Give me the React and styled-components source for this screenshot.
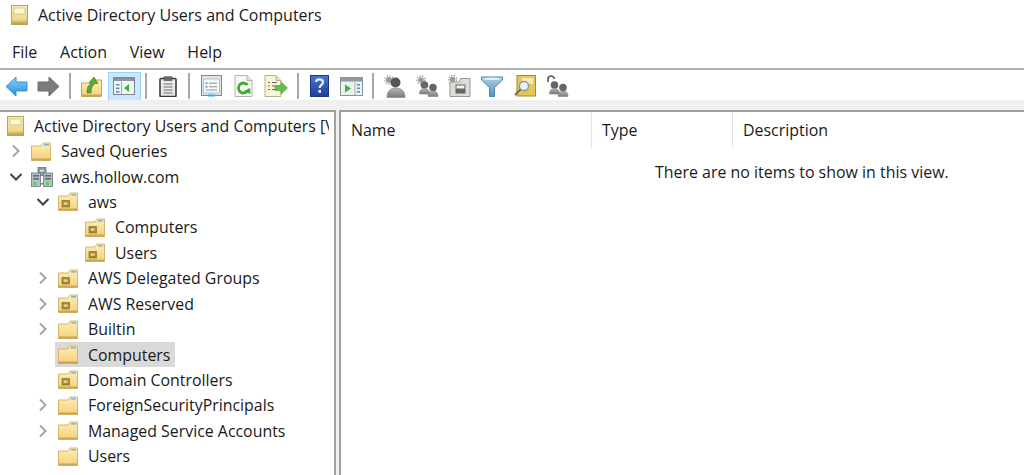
import React from 'react';
import styled, { createGlobalStyle } from 'styled-components';

const Global = createGlobalStyle`
  html, body { margin: 0; padding: 0; background: #fff; }
  body { font-family: "Open Sans", "Noto Sans", "Liberation Sans", sans-serif; color: #1a1a1a; overflow: hidden; }
`;

const Window = styled.div`
  width: 1024px;
  height: 475px;
  display: flex;
  flex-direction: column;
  overflow: hidden;
`;

const TitleBar = styled.div`
  height: 30px;
  display: flex;
  align-items: center;
  gap: 10px;
  padding-left: 11px;
  font-size: 16px;
`;

const MenuBar = styled.div`
  height: 40px;
  display: flex;
  align-items: center;
  gap: 22.7px;
  padding: 5px 0 0 12px;
  box-sizing: border-box;
  font-size: 16px;
  border-bottom: 2px solid #b0b0b0;
`;

const Toolbar = styled.div`
  height: 30px;
  display: flex;
  align-items: center;
  box-sizing: border-box;
  padding-top: 2px;
`;

const ToolButton = styled.div`
  width: 32.4px;
  height: 29px;
  display: flex;
  align-items: center;
  justify-content: center;
  box-sizing: border-box;
  background: ${p => (p.$active ? '#cce8ff' : 'transparent')};
  border: 1px solid ${p => (p.$active ? '#99d1ff' : 'transparent')};
`;

const ToolSep = styled.div`
  width: 11px;
  height: 26px;
  display: flex;
  justify-content: center;
  &::before { content: ''; width: 2px; background: #a8a8a8; }
`;

const Strip = styled.div`
  height: 10px;
  background: #f0f0f0;
`;

const Panes = styled.div`
  flex: 1;
  display: flex;
  background: #f0f0f0;
  min-height: 0;
`;

const LeftPane = styled.div`
  width: 336px;
  box-sizing: border-box;
  background: #fff;
  padding-top: 1px;
  border-top: 2px solid #a0a0a0;
  border-right: 2px solid #a0a0a0;
  overflow: hidden;
  font-size: 15.9px;
`;

const RightPane = styled.div`
  flex: 1;
  margin-left: 3px;
  background: #fff;
  border-top: 2px solid #a0a0a0;
  border-left: 2px solid #a0a0a0;
  font-size: 15.95px;
`;

const Row = styled.div`
  height: 25.43px;
  display: flex;
  align-items: center;
  white-space: nowrap;
  padding-left: ${p => 4 + Math.max(p.$level - 1, 0) * 27}px;
`;

const Chevron = styled.div`
  width: 24px;
  height: 100%;
  flex: none;
  display: flex;
  align-items: center;
  justify-content: center;
`;

const Item = styled.div`
  height: 25px;
  min-width: 0;
  display: flex;
  align-items: center;
  gap: ${p => p.$gap}px;
  padding: 0 5px 0 3px;
  background: ${p => (p.$selected ? '#d9d9d9' : 'transparent')};
`;

const Label = styled.span`
  min-width: 0;
  overflow: hidden;
`;

const HeaderRow = styled.div`
  height: 36px;
  display: flex;
`;

const HeaderCell = styled.div`
  width: ${p => p.$w}px;
  box-sizing: border-box;
  padding-left: 10px;
  display: flex;
  align-items: center;
  border-right: ${p => (p.$last ? 'none' : '1px solid #e5e5e5')};
`;

const Empty = styled.div`
  padding: 14px 0 0 314px;
  line-height: 20px;
`;

const Defs = styled.svg`
  display: block;
  width: 0;
  height: 0;
`;

const Glyph = styled.svg`
  display: block;
  flex: none;
  filter: blur(0.35px);
`;

const GradientDefs = () => (
  <Defs aria-hidden="true">
    <defs>
      <linearGradient id="folderFill" x1="0" y1="0" x2="0" y2="1">
        <stop offset="0" stopColor="#fdeeb8" />
        <stop offset="1" stopColor="#f5cf7a" />
      </linearGradient>
      <linearGradient id="bookFill" x1="0" y1="0" x2="0" y2="1">
        <stop offset="0" stopColor="#f8efb8" />
        <stop offset="0.75" stopColor="#ecd88a" />
        <stop offset="1" stopColor="#b8963c" />
      </linearGradient>
      <linearGradient id="blueArrow" x1="0" y1="0" x2="0" y2="1">
        <stop offset="0" stopColor="#8fd0f8" />
        <stop offset="1" stopColor="#1f8fe0" />
      </linearGradient>
      <linearGradient id="helpFill" x1="0" y1="0" x2="0" y2="1">
        <stop offset="0" stopColor="#4a78cc" />
        <stop offset="1" stopColor="#1c3f9a" />
      </linearGradient>
      <linearGradient id="funnelFill" x1="0" y1="0" x2="0" y2="1">
        <stop offset="0" stopColor="#a8d0e8" />
        <stop offset="1" stopColor="#5b93b8" />
      </linearGradient>
      <linearGradient id="personFill" x1="0" y1="0" x2="0" y2="1">
        <stop offset="0" stopColor="#b4b4b4" />
        <stop offset="1" stopColor="#7a7a7a" />
      </linearGradient>
    </defs>
  </Defs>
);

const ChevronRight = () => (
  <Glyph width="12" height="14" viewBox="0 0 12 14">
    <path d="M3 1.5 L8.5 7 L3 12.5" fill="none" stroke="#a6a6a6" strokeWidth="2" />
  </Glyph>
);

const ChevronDown = () => (
  <Glyph width="14" height="12" viewBox="0 0 14 12">
    <path d="M1.5 3 L7 8.5 L12.5 3" fill="none" stroke="#404040" strokeWidth="2" />
  </Glyph>
);

const Folder = ({ ou }) => (
  <Glyph width="20" height="19" viewBox="0 0 20 19">
    <path d="M0.5 4 H10 L12 1 H19.5 V18.5 H0.5 Z" fill="url(#folderFill)" stroke="#d9b667" />
    <rect x="13" y="2" width="5" height="1.6" fill="#7fb4e0" />
    <rect x="0.5" y="16.5" width="19" height="2" fill="#c9a653" />
    {ou && <rect x="4" y="8.5" width="7.5" height="6.5" fill="#a58a3a" stroke="#7c6a2a" strokeWidth="0.6" />}
    {ou && <rect x="5.6" y="10.4" width="4" height="2.4" fill="#e9d48a" />}
  </Glyph>
);

const BookIcon = () => (
  <Glyph width="17" height="20" viewBox="0 0 17 20">
    <rect x="0.5" y="0.5" width="16" height="19" fill="url(#bookFill)" stroke="#b9a25a" />
    <rect x="3" y="3" width="11" height="6" fill="#fbf7d8" stroke="#cdb96e" strokeWidth="0.7" />
  </Glyph>
);

const DomainIcon = () => (
  <Glyph width="22" height="20" viewBox="0 0 22 20">
    <rect x="7" y="0.5" width="8" height="8" fill="#8d9aa5" stroke="#5f6b75" strokeWidth="0.7" />
    <rect x="0.5" y="6" width="9" height="13.5" fill="#b6bfc7" stroke="#66737d" strokeWidth="0.8" />
    <rect x="12.5" y="6" width="9" height="13.5" fill="#b6bfc7" stroke="#66737d" strokeWidth="0.8" />
    <rect x="2" y="8" width="6" height="1.6" fill="#5e6a74" />
    <rect x="2" y="11" width="6" height="1.6" fill="#5e6a74" />
    <rect x="14" y="8" width="6" height="1.6" fill="#5e6a74" />
    <rect x="14" y="11" width="6" height="1.6" fill="#5e6a74" />
    <rect x="9" y="3" width="4" height="1.5" fill="#e6ebef" />
    <rect x="2.5" y="15" width="3" height="3" fill="#53d04a" />
    <rect x="15" y="15" width="3" height="3" fill="#53d04a" />
    <rect x="9.5" y="16" width="3" height="1.5" fill="#7b8791" />
  </Glyph>
);

const ArrowIcon = ({ dir, fill, stroke }) => (
  <Glyph width="23" height="21" viewBox="0 0 23 21">
    <path
      d={dir === 'left'
        ? 'M1 10.5 L11 1 V6 H22 V15 H11 V20 Z'
        : 'M22 10.5 L12 1 V6 H1 V15 H12 V20 Z'}
      fill={fill}
      stroke={stroke}
    />
  </Glyph>
);

const UpFolderIcon = () => (
  <Glyph width="21" height="21" viewBox="0 0 21 21">
    <path d="M0.5 7 H9 L11 4 H20.5 V20.5 H0.5 Z" fill="url(#folderFill)" stroke="#c9a653" />
    <rect x="0.5" y="18.5" width="20" height="2" fill="#c9a653" />
    <path d="M6 17 C6 12 7 9 10 8 L8 6.5 L13 1 L17 7.5 L14 7.5 C11.5 9 10 12 10 17 Z" fill="#58a92f" stroke="#3d7f1e" strokeWidth="0.6" />
  </Glyph>
);

const ConsoleTreeIcon = () => (
  <Glyph width="22" height="18" viewBox="0 0 22 18">
    <rect x="0.5" y="0.5" width="21" height="17" fill="#f2f5f7" stroke="#7a868e" />
    <rect x="1" y="1" width="20" height="3" fill="#8a96a0" />
    <path d="M8.5 4.5 V17" stroke="#9aa4ab" />
    <rect x="3" y="7" width="3.5" height="1.6" fill="#5a90c4" />
    <rect x="3" y="10.5" width="3.5" height="1.6" fill="#5a90c4" />
    <rect x="3" y="14" width="3.5" height="1.6" fill="#5a90c4" />
    <path d="M11 11 L16 7 V15 Z" fill="#3fb23a" />
  </Glyph>
);

const ClipboardIcon = () => (
  <Glyph width="18" height="21" viewBox="0 0 18 21">
    <rect x="1" y="2.5" width="16" height="18" rx="1" fill="#e9e9e9" stroke="#3c3c3c" strokeWidth="1.6" />
    <rect x="5" y="0.8" width="8" height="3.6" fill="#6b6b6b" stroke="#3c3c3c" strokeWidth="0.6" />
    <path d="M4.5 8 H13.5 M4.5 11 H13.5 M4.5 14 H13.5 M4.5 17 H13.5" stroke="#6f6f6f" strokeWidth="1.2" />
  </Glyph>
);

const PropertiesIcon = () => (
  <Glyph width="21" height="22" viewBox="0 0 21 22">
    <rect x="0.5" y="0.5" width="20" height="20" fill="#dfe5ea" stroke="#7d8890" />
    <rect x="2.5" y="4" width="16" height="14" fill="#f7f8f9" stroke="#a4adb4" strokeWidth="0.7" />
    <rect x="4.5" y="7.5" width="2" height="1.6" fill="#5a9ad8" />
    <rect x="4.5" y="11" width="2" height="1.6" fill="#5a9ad8" />
    <path d="M8 8.3 H16 M8 11.8 H16 M5 15 H16" stroke="#8b949b" strokeWidth="1.1" />
    <rect x="7" y="19.5" width="7" height="2" fill="#38a7e0" />
  </Glyph>
);

const RefreshIcon = () => (
  <Glyph width="19" height="22" viewBox="0 0 19 22">
    <path d="M1 0.5 H13 L18 5.5 V21.5 H1 Z" fill="#f6f6f2" stroke="#b5b5ad" />
    <path d="M13 0.5 V5.5 H18" fill="#e2e2dc" stroke="#b5b5ad" />
    <path d="M13.5 10 A5 5 0 1 0 13.5 16" fill="none" stroke="#3fa83a" strokeWidth="2.8" />
    <path d="M10 16 L16 13 L16.5 19 Z" fill="#3fa83a" />
  </Glyph>
);

const ExportIcon = () => (
  <Glyph width="24" height="22" viewBox="0 0 24 22">
    <path d="M1 0.5 H12 L17 5.5 V21.5 H1 Z" fill="#faf5d8" stroke="#b8b08a" />
    <path d="M12 0.5 V5.5 H17" fill="#e8e0b8" stroke="#b8b08a" />
    <path d="M4 7.5 H6 M8 7.5 H13 M4 11 H6 M8 11 H12 M4 14.5 H6 M8 14.5 H11" stroke="#6b6b5a" strokeWidth="1.2" />
    <path d="M11 10.5 H17 V7 L23.5 13 L17 19 V15.5 H11 Z" fill="#62c04a" stroke="#3f9c30" strokeWidth="0.6" />
  </Glyph>
);

const HelpIcon = () => (
  <Glyph width="19" height="22" viewBox="0 0 19 22">
    <rect x="0.5" y="0.5" width="18" height="21" fill="url(#helpFill)" stroke="#1c3380" />
    <path d="M6 7 C6 3.5 13 3.2 13 7.2 C13 9.8 9.6 10 9.6 13" fill="none" stroke="#e8eefb" strokeWidth="2.2" />
    <rect x="8.4" y="15" width="2.6" height="2.8" fill="#e8eefb" />
  </Glyph>
);

const ActionPaneIcon = () => (
  <Glyph width="23" height="19" viewBox="0 0 23 19">
    <rect x="0.5" y="0.5" width="22" height="18" fill="#eef1f2" stroke="#8a959c" />
    <rect x="1" y="1" width="21" height="3.5" fill="#8f9ba3" />
    <path d="M15 5 V18" stroke="#a2abb1" />
    <path d="M5 7.5 L11 11.5 L5 15.5 Z" fill="#3fb23a" />
    <rect x="17" y="7" width="3" height="1.6" fill="#5a90c4" />
    <rect x="17" y="10.5" width="3" height="1.6" fill="#5a90c4" />
    <rect x="17" y="14" width="3" height="1.6" fill="#5a90c4" />
  </Glyph>
);

const Gear = ({ x, y, r = 3 }) => (
  <g>
    <circle cx={x} cy={y} r={r} fill="#9a9a9a" />
    <circle cx={x} cy={y} r={r + 1.2} fill="none" stroke="#9a9a9a" strokeWidth="1.3" strokeDasharray="1.4 1.4" />
  </g>
);

const Person = ({ x, y, s = 1 }) => (
  <g transform={`translate(${x} ${y}) scale(${s})`}>
    <circle cx="5" cy="4" r="3.8" fill="#666" />
    <path d="M0 13 C0 8.5 2.5 7.5 5 7.5 C7.5 7.5 10 8.5 10 13 Z" fill="url(#personFill)" stroke="#777" strokeWidth="0.5" />
  </g>
);

const UserIcon = () => (
  <Glyph width="22" height="23" viewBox="0 0 22 23">
    <Gear x={5} y={5} r={3} />
    <circle cx="11.5" cy="7.5" r="5" fill="#555" />
    <path d="M3 22.5 C3 15.5 7 13 11.5 13 C17 13 21 15.5 21 22.5 Z" fill="url(#personFill)" stroke="#777" strokeWidth="0.5" />
  </Glyph>
);

const GroupIcon = ({ locked }) => (
  <Glyph width="23" height="22" viewBox="0 0 23 22">
    {locked
      ? <path d="M2 7 V4.5 A3.2 3.2 0 0 1 8.4 4" fill="none" stroke="#5a5a5a" strokeWidth="1.6" />
      : <Gear x={5} y={5} r={2.8} />}
    <Person x={3.5} y={6} s={1} />
    <Person x={12} y={8.5} s={1} />
  </Glyph>
);

const OuToolIcon = () => (
  <Glyph width="23" height="22" viewBox="0 0 23 22">
    <Gear x={4.5} y={4.5} r={2.8} />
    <path d="M2 7 H11 L12.5 3.5 H22 V21.5 H2 Z" fill="#dcdcd8" stroke="#9a9a95" />
    <rect x="8" y="10" width="9" height="8" fill="#f2f2ee" stroke="#666" />
    <rect x="8" y="13.5" width="9" height="4.5" fill="#666" />
  </Glyph>
);

const FilterIcon = () => (
  <Glyph width="22" height="21" viewBox="0 0 22 21">
    <path d="M0.5 1 H21.5 V4 L13.5 11.5 V20.5 H8.5 V11.5 L0.5 4 Z" fill="url(#funnelFill)" stroke="#4d86ab" />
    <ellipse cx="11" cy="2.8" rx="9" ry="1.3" fill="#dff0fa" />
  </Glyph>
);

const FindIcon = () => (
  <Glyph width="22" height="22" viewBox="0 0 22 22">
    <rect x="3" y="0.5" width="18.5" height="20.5" fill="#e6c755" stroke="#a88a2c" />
    <rect x="8" y="3" width="11" height="6" fill="#f6ecb0" />
    <circle cx="10" cy="11" r="4.6" fill="#e8f4fb" stroke="#8f9aa2" strokeWidth="1.5" />
    <path d="M6.5 14.5 L1 20" stroke="#7d6a48" strokeWidth="2" />
  </Glyph>
);

const menus = ['File', 'Action', 'View', 'Help'];

const tools = [
  { icon: <ArrowIcon dir="left" fill="url(#blueArrow)" stroke="#3d90cf" /> },
  { icon: <ArrowIcon dir="right" fill="#7c7c7c" stroke="#6a6a6a" /> },
  { sep: true },
  { icon: <UpFolderIcon /> },
  { icon: <ConsoleTreeIcon />, active: true },
  { sep: true },
  { icon: <ClipboardIcon /> },
  { sep: true },
  { icon: <PropertiesIcon /> },
  { icon: <RefreshIcon /> },
  { icon: <ExportIcon /> },
  { sep: true },
  { icon: <HelpIcon /> },
  { icon: <ActionPaneIcon /> },
  { sep: true },
  { icon: <UserIcon /> },
  { icon: <GroupIcon /> },
  { icon: <OuToolIcon /> },
  { icon: <FilterIcon /> },
  { icon: <FindIcon /> },
  { icon: <GroupIcon locked /> },
];

const tree = [
  { level: 0, label: 'Active Directory Users and Computers [V', kind: 'book' },
  { level: 1, label: 'Saved Queries', kind: 'folder', toggle: 'closed' },
  { level: 1, label: 'aws.hollow.com', kind: 'domain', toggle: 'open' },
  { level: 2, label: 'aws', kind: 'ou', toggle: 'open' },
  { level: 3, label: 'Computers', kind: 'ou', toggle: 'none' },
  { level: 3, label: 'Users', kind: 'ou', toggle: 'none' },
  { level: 2, label: 'AWS Delegated Groups', kind: 'ou', toggle: 'closed' },
  { level: 2, label: 'AWS Reserved', kind: 'ou', toggle: 'closed' },
  { level: 2, label: 'Builtin', kind: 'folder', toggle: 'closed' },
  { level: 2, label: 'Computers', kind: 'folder', toggle: 'none', selected: true },
  { level: 2, label: 'Domain Controllers', kind: 'ou', toggle: 'none' },
  { level: 2, label: 'ForeignSecurityPrincipals', kind: 'folder', toggle: 'closed' },
  { level: 2, label: 'Managed Service Accounts', kind: 'folder', toggle: 'closed' },
  { level: 2, label: 'Users', kind: 'folder', toggle: 'none' },
];

const treeIcon = kind => {
  if (kind === 'book') return <BookIcon />;
  if (kind === 'domain') return <DomainIcon />;
  return <Folder ou={kind === 'ou'} />;
};

export default function App() {
  return (
    <Window>
      <Global />
      <GradientDefs />
      <TitleBar>
        <BookIcon />
        <span>Active Directory Users and Computers</span>
      </TitleBar>
      <MenuBar>
        {menus.map(m => <span key={m}>{m}</span>)}
      </MenuBar>
      <Toolbar>
        {tools.map((t, i) => (t.sep
          ? <ToolSep key={i} />
          : <ToolButton key={i} $active={t.active}>{t.icon}</ToolButton>))}
      </Toolbar>
      <Strip />
      <Panes>
        <LeftPane>
          {tree.map((n, i) => (
            <Row key={i} $level={n.level}>
              {n.level > 0 && (
                <Chevron>
                  {n.toggle === 'closed' && <ChevronRight />}
                  {n.toggle === 'open' && <ChevronDown />}
                </Chevron>
              )}
              <Item $selected={n.selected} $gap={n.kind === 'domain' ? 8 : 10}>
                {treeIcon(n.kind)}
                <Label>{n.label}</Label>
              </Item>
            </Row>
          ))}
        </LeftPane>
        <RightPane>
          <HeaderRow>
            <HeaderCell $w={251}>Name</HeaderCell>
            <HeaderCell $w={141}>Type</HeaderCell>
            <HeaderCell $w={290} $last>Description</HeaderCell>
          </HeaderRow>
          <Empty>There are no items to show in this view.</Empty>
        </RightPane>
      </Panes>
    </Window>
  );
}
